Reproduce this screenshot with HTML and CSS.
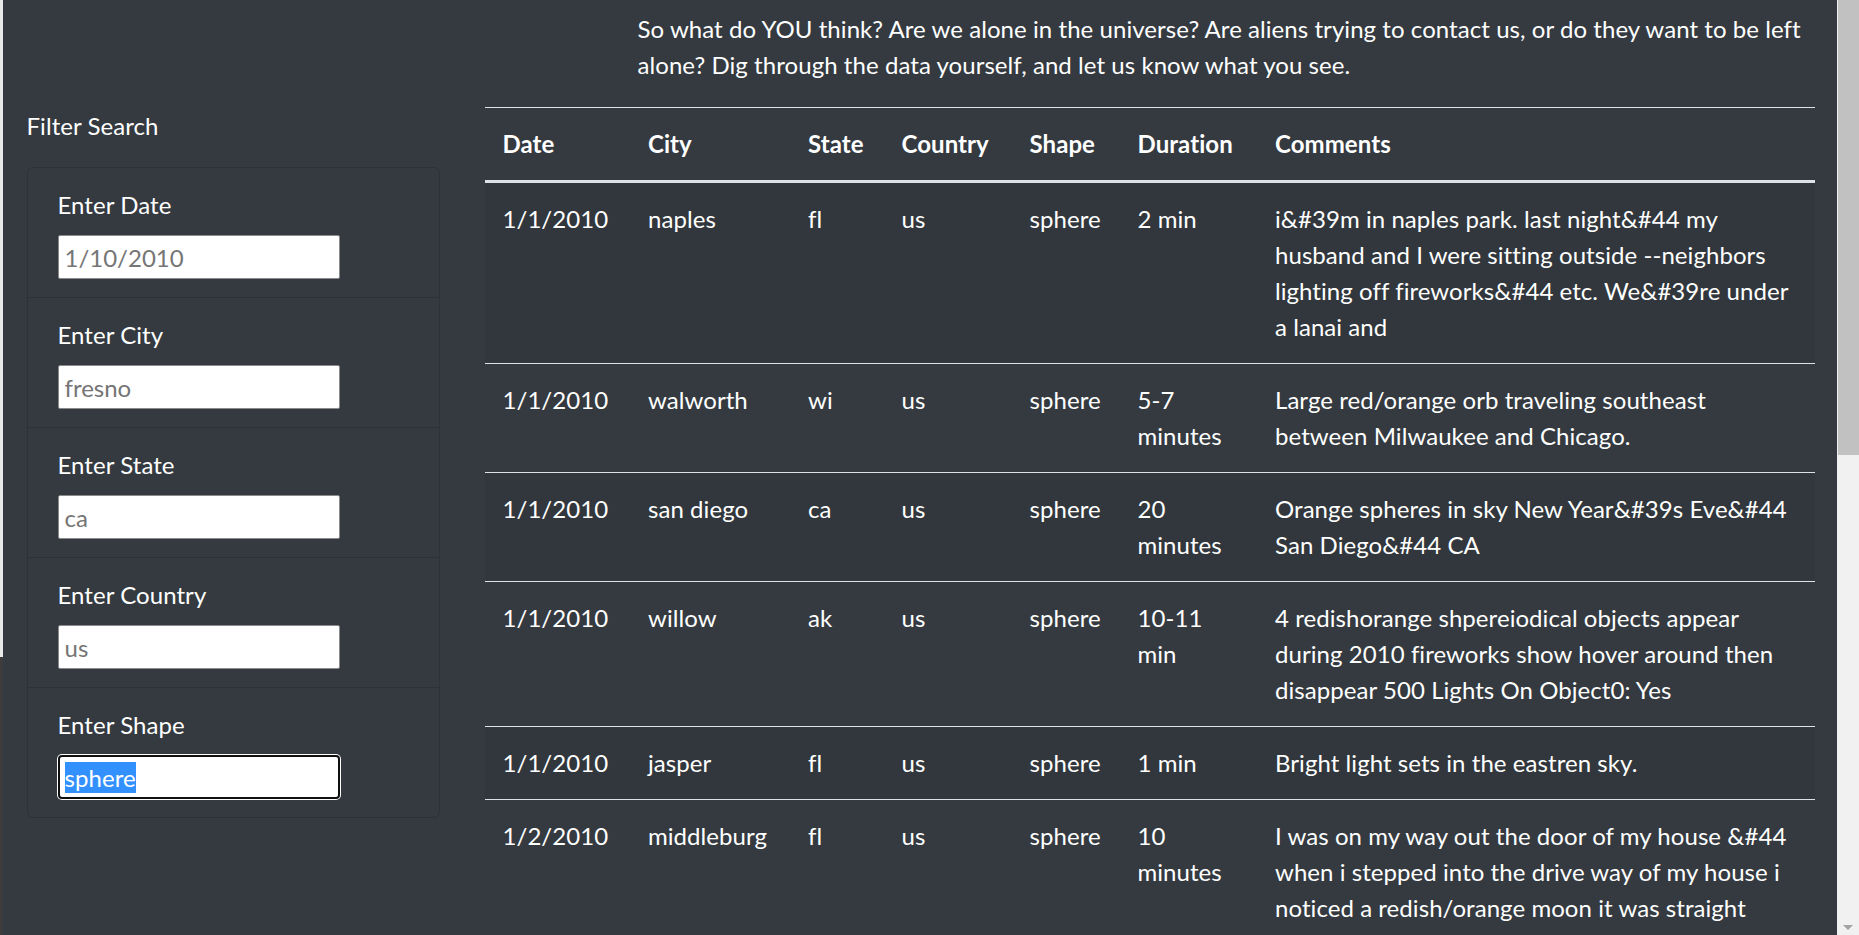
FILE: index.html
```html
<!DOCTYPE html>
<html lang="en">
<head>
<meta charset="utf-8">
<title>UFO Sightings</title>
<link rel="stylesheet" href="styles.css">
</head>
<body>
<div class="frame">
  <div class="edge"></div>
  <main class="page">
    <aside class="side">
      <h5 class="filter-title">Filter Search</h5>
      <ul class="filters">
        <li class="filter">
          <label class="filter-label" for="date">Enter Date</label>
          <input class="filter-input" id="date" type="text" placeholder="1/10/2010">
        </li>
        <li class="filter">
          <label class="filter-label" for="city">Enter City</label>
          <input class="filter-input" id="city" type="text" placeholder="fresno">
        </li>
        <li class="filter">
          <label class="filter-label" for="state">Enter State</label>
          <input class="filter-input" id="state" type="text" placeholder="ca">
        </li>
        <li class="filter">
          <label class="filter-label" for="country">Enter Country</label>
          <input class="filter-input" id="country" type="text" placeholder="us">
        </li>
        <li class="filter">
          <label class="filter-label">Enter Shape</label>
          <div class="filter-input focused"><span class="selected">sphere</span></div>
        </li>
      </ul>
    </aside>
    <section class="content">
      <p class="intro">So what do YOU think? Are we alone in the universe? Are aliens trying to contact us, or do they want to be left alone? Dig through the data yourself, and let us know what you see.</p>
      <table class="sightings">
        <colgroup>
          <col class="c-date"><col class="c-city"><col class="c-state"><col class="c-country"><col class="c-shape"><col class="c-duration"><col>
        </colgroup>
        <thead>
          <tr><th>Date</th><th>City</th><th>State</th><th>Country</th><th>Shape</th><th>Duration</th><th>Comments</th></tr>
        </thead>
        <tbody>
          <tr><td>1/1/2010</td><td>naples</td><td>fl</td><td>us</td><td>sphere</td><td>2 min</td><td>i&amp;#39m in naples park. last night&amp;#44 my husband and I were sitting outside --neighbors lighting off fireworks&amp;#44 etc. We&amp;#39re under a lanai and</td></tr>
          <tr><td>1/1/2010</td><td>walworth</td><td>wi</td><td>us</td><td>sphere</td><td>5-7 minutes</td><td>Large red/orange orb traveling southeast between Milwaukee and Chicago.</td></tr>
          <tr><td>1/1/2010</td><td>san diego</td><td>ca</td><td>us</td><td>sphere</td><td>20 minutes</td><td>Orange spheres in sky New Year&amp;#39s Eve&amp;#44 San Diego&amp;#44 CA</td></tr>
          <tr><td>1/1/2010</td><td>willow</td><td>ak</td><td>us</td><td>sphere</td><td>10-11 min</td><td>4 redishorange shpereiodical objects appear during 2010 fireworks show hover around then disappear 500 Lights On Object0: Yes</td></tr>
          <tr><td>1/1/2010</td><td>jasper</td><td>fl</td><td>us</td><td>sphere</td><td>1 min</td><td>Bright light sets in the eastren sky.</td></tr>
          <tr><td>1/2/2010</td><td>middleburg</td><td>fl</td><td>us</td><td>sphere</td><td>10 minutes</td><td>I was on my way out the door of my house &amp;#44 when i stepped into the drive way of my house i noticed a redish/orange moon it was straight</td></tr>
        </tbody>
      </table>
    </section>
  </main>
  <div class="scrollbar">
    <div class="thumb"></div>
    <div class="arrow"></div>
  </div>
</div>
</body>
</html>
```
FILE: styles.css
```css
html, body {
  margin: 0;
  padding: 0;
  height: 100%;
  overflow: hidden;
}

body {
  background: #343a40;
  color: #fff;
  font-family: "Lato", "Noto Sans", sans-serif;
  font-size: 24px;
  line-height: 1.5;
  letter-spacing: 0.06px;
}

.frame {
  display: flex;
  height: 935px;
  overflow: hidden;
}

.edge {
  flex: none;
  width: 4px;
  background: linear-gradient(90deg, #e9e9e9 0, #e9e9e9 3px, #343a40 3px);
}

.edge::after {
  content: "";
  display: block;
  height: 100%;
  margin-top: 657px;
  width: 3px;
  background: #3d3b3b;
}

.page {
  flex: 1;
  min-width: 0;
  display: flex;
  align-items: flex-start;
}

.side {
  flex: none;
  width: 458px;
  box-sizing: border-box;
  padding: 108px 22.5px 0;
}

.filter-title {
  margin: 0 0 23px;
  font-size: 24px;
  font-weight: 400;
  line-height: 36px;
}

.filters {
  list-style: none;
  margin: 0;
  padding: 0;
  border: 1px solid rgba(0, 0, 0, 0.13);
  border-radius: 6px;
}

.filter {
  padding: 19px 30px 18px;
}

.filter + .filter {
  border-top: 1px solid rgba(0, 0, 0, 0.13);
}

.filter-label {
  display: block;
  margin-bottom: 12px;
  line-height: 36px;
}

.filter-input {
  display: block;
  box-sizing: border-box;
  width: 282px;
  height: 44px;
  margin: 0;
  padding: 0 6px;
  border: 1px solid #8a8a8a;
  border-radius: 2px;
  background: #fff;
  color: #000;
  font: inherit;
  font-size: 24px;
  line-height: 30px;
  outline: none;
}

.filter-input::placeholder {
  color: #757575;
}

.focused {
  display: flex;
  align-items: center;
  padding: 0 5px;
  border: 2px solid #101010;
  border-radius: 4px;
  box-shadow: 0 0 0 1px #fff;
}

.selected {
  background: #3390ff;
  color: #fff;
  line-height: 31px;
}

.content {
  flex: 1;
  min-width: 0;
  padding: 11px 22.5px 0;
}

.intro {
  margin: 0 0 24px 153px;
}

.sightings {
  width: 100%;
  border-collapse: collapse;
  table-layout: fixed;
}

.c-date { width: 145.5px; }
.c-city { width: 160px; }
.c-state { width: 93.5px; }
.c-country { width: 128px; }
.c-shape { width: 108px; }
.c-duration { width: 137.5px; }

.sightings th,
.sightings td {
  padding: 18px;
  text-align: left;
  vertical-align: top;
  border-top: 1px solid #dee2e6;
}

.sightings th {
  font-weight: 700;
  vertical-align: bottom;
  border-bottom: 3px solid #dee2e6;
}

.sightings tbody tr:nth-child(odd) {
  background: rgba(0, 0, 0, 0.05);
}

.scrollbar {
  flex: none;
  width: 22px;
  display: flex;
  flex-direction: column;
  align-items: flex-end;
  background: #f1f1f1;
}

.thumb {
  width: 21px;
  height: 455px;
  background: #c1c1c1;
}

.arrow {
  margin-top: auto;
  margin-right: 6px;
  margin-bottom: 5px;
  width: 0;
  height: 0;
  border-left: 5px solid transparent;
  border-right: 5px solid transparent;
  border-top: 5px solid #a3a3a3;
}
```
